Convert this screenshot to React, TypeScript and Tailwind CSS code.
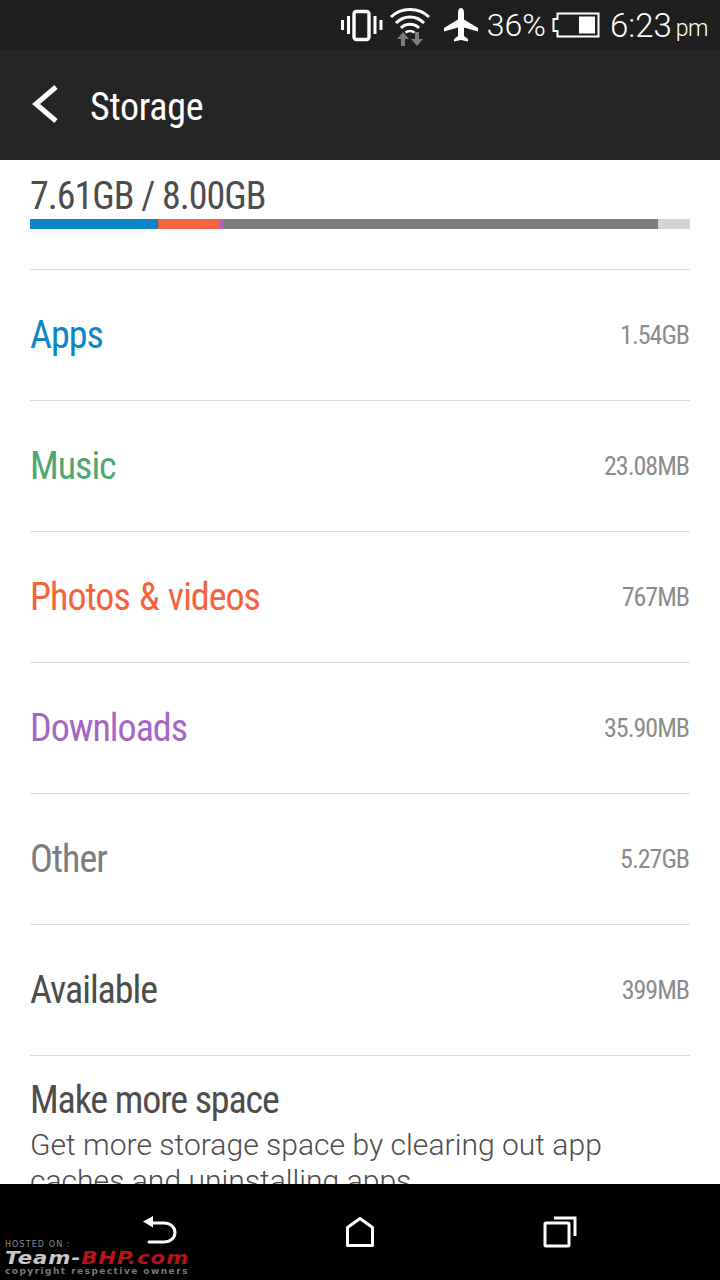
const rows = [
  { label: 'Apps', size: '1.54GB', color: 'text-[#0d86c6]' },
  { label: 'Music', size: '23.08MB', color: 'text-[#4fa873]' },
  { label: 'Photos & videos', size: '767MB', color: 'text-[#f4643c]' },
  { label: 'Downloads', size: '35.90MB', color: 'text-[#a866c4]' },
  { label: 'Other', size: '5.27GB', color: 'text-[#7d7d7d]' },
  { label: 'Available', size: '399MB', color: 'text-[#4d4d4d]' },
];

function VibrateIcon() {
  return (
    <svg width="44" height="36" viewBox="0 0 44 36" fill="none" stroke="white" className="shrink-0">
      <rect x="14" y="4.5" width="15" height="28" rx="2.5" strokeWidth="3.4" />
      <path d="M8.500 9v18M35 9v18" strokeWidth="3" />
      <path d="M2.500 13v10M41 13v10" strokeWidth="3" />
    </svg>
  );
}

function WifiIcon() {
  return (
    <svg width="42" height="44" viewBox="0 0 42 44" fill="none" className="shrink-0">
      <path d="M2 14C12 4 30 4 40 14" stroke="white" strokeWidth="3" />
      <path d="M7 20C15 12 27 12 35 20" stroke="white" strokeWidth="3" />
      <path d="M12 25C17 20 25 20 30 25" stroke="white" strokeWidth="3" />
      <path d="M16.5 29.5C19 27.5 23 27.5 25.5 29.5" stroke="white" strokeWidth="2.5" />
      <path d="M14 29l-6 7h4v7h4v-7h4zM28 43l6-7h-4v-7h-4v7h-4z" fill="#7d7d7d" />
    </svg>
  );
}

function PlaneIcon() {
  return (
    <svg width="36" height="36" viewBox="0 0 36 36" fill="white" className="shrink-0">
      <path d="M18 1c1.8 0 3 2 3 4.500V12.500L35 21v3.500L21 20.500V29l4 3v2.500L18 33l-7 1.500V32l4-3V20.500L1 24.500V21l14-8.500V5.500C15 3 16.200 1 18 1z" />
    </svg>
  );
}

function BatteryIcon() {
  return (
    <svg width="48" height="26" viewBox="0 0 48 26" fill="none" className="shrink-0">
      <path d="M5.500 1.500H46.500V24.500H5.500V19H1.500V7H5.500Z" stroke="white" strokeWidth="2" />
      <rect x="27" y="4.500" width="16" height="17" fill="white" />
    </svg>
  );
}

function BackIcon() {
  return (
    <svg width="34" height="32" viewBox="0 0 34 32" fill="none" className="shrink-0">
      <path d="M8 7H21C27 7 32 11 32 16.500C32 22 27 26 21 26H6" stroke="white" strokeWidth="3" strokeLinecap="round" />
      <path d="M0 5.500L10 0V11.500Z" fill="white" />
    </svg>
  );
}

export default function App() {
  return (
    <div className="relative flex h-[1280px] w-[720px] flex-col overflow-hidden bg-white font-['Roboto',sans-serif] [font-stretch:75%]">
      <div className="flex h-[50px] shrink-0 items-center justify-end bg-[#1f1f1f] pr-[12px] text-white [font-stretch:100%]">
        <VibrateIcon />
        <div className="ml-[5px]"><WifiIcon /></div>
        <div className="ml-[12px]"><PlaneIcon /></div>
        <span className="ml-[8px] text-[32px] leading-none font-light">36%</span>
        <div className="ml-[6px]"><BatteryIcon /></div>
        <span className="ml-[10px] text-[33px] leading-none font-light">6:23</span>
        <span className="ml-[4px] mt-[6px] text-[23px] leading-none font-light tracking-[-0.5px]">pm</span>
      </div>

      <div className="flex h-[110px] shrink-0 items-center bg-[#252525] pl-[32px] text-white">
        <svg width="26" height="38" viewBox="0 0 26 38" fill="none" className="shrink-0 -mt-[2px]">
          <path d="M24 2L4 19L24 36" stroke="white" strokeWidth="5" />
        </svg>
        <span className="ml-[32px] mt-[3px] text-[38px] leading-none tracking-[-0.3px]">Storage</span>
      </div>

      <div className="flex-1 overflow-hidden px-[30px]">
        <div className="pt-[14px] text-[38px] leading-[44px] tracking-[-1px] text-[#4d4d4d]">7.61GB / 8.00GB</div>
        <div className="mt-[1px] flex h-[10px]">
          <div className="w-[128px] bg-[#0d86c6]" />
          <div className="w-[62px] bg-[#f4643c]" />
          <div className="w-[3px] bg-[#a866c4]" />
          <div className="w-[435px] bg-[#7d7d7d]" />
          <div className="flex-1 bg-[#d4d4d4]" />
        </div>

        <div className="mt-[40px] border-t border-[#dcdcdc]">
          {rows.map((r) => (
            <div key={r.label} className="flex h-[131px] items-center justify-between border-b border-[#dcdcdc]">
              <span className={`text-[38px] leading-none tracking-[-1px] [word-spacing:1.5px] ${r.color}`}>{r.label}</span>
              <span className="pr-[1px] text-[26px] leading-none tracking-[-1px] text-[#8c8c8c]">{r.size}</span>
            </div>
          ))}
        </div>

        <div className="pt-[22px] text-[38px] leading-[44px] font-[450] tracking-[-1.1px] text-[#4d4d4d]">Make more space</div>
        <div className="mt-[5px] text-[30px] leading-[36px] font-light tracking-[0.03px] text-[#4d4d4d] [font-stretch:100%]">
          Get more storage space by clearing out app caches and uninstalling apps
        </div>
      </div>

      <div className="grid h-[96px] shrink-0 grid-cols-3 bg-black px-[60px] pt-[32px]">
        <div className="flex justify-center"><BackIcon /></div>
        <div className="flex justify-center">
          <svg width="30" height="32" viewBox="0 0 30 32" fill="none" className="shrink-0">
            <path d="M2.500 11.500L15 2.500L27.500 11.500V29.500H2.500Z" stroke="white" strokeWidth="3" strokeLinejoin="round" />
          </svg>
        </div>
        <div className="flex justify-center">
          <svg width="34" height="32" viewBox="0 0 34 32" fill="none" className="shrink-0">
            <rect x="2" y="7" width="24" height="23" rx="1" stroke="white" strokeWidth="3" />
            <path d="M11 2H32V20" stroke="white" strokeWidth="3" />
          </svg>
        </div>
      </div>

      {/* forum watermark */}
      <div className="absolute bottom-[3px] left-[5px] font-['DejaVu_Sans',sans-serif] [font-stretch:100%]">
        <div className="text-[8px] leading-[10px] tracking-[1.1px] text-[#8a8a8a]">HOSTED ON :</div>
        <div className="origin-left scale-x-[1.25] text-[17px] leading-[16px] font-bold italic tracking-[0.75px] whitespace-nowrap">
          <span className="text-[#c8c8c8]">Team-</span>
          <span className="text-[#b5121b]">BHP.com</span>
        </div>
        <div className="text-[9px] leading-[11px] font-bold tracking-[1.45px] text-[#777] whitespace-nowrap">copyright respective owners</div>
      </div>
    </div>
  );
}
